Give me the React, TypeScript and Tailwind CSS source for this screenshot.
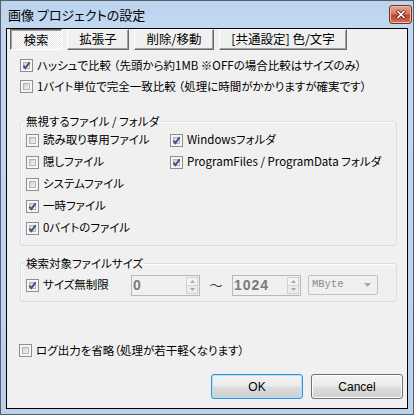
import React from 'react';

function Check({ checked }: { checked?: boolean }) {
  return (
    <span className="flex h-[13px] w-[13px] shrink-0 items-center justify-center border border-[#8f8f8f] bg-[#f6f6f6] p-[2px]">
      <span className="flex h-full w-full items-center justify-center border border-[#b5b5b5] bg-gradient-to-br from-[#d0d0d0] to-[#f6f6f6]">
        {checked && (
          <svg width="9" height="9" viewBox="0 0 9 9" className="shrink-0">
            <path d="M1.4 4.6 L3.4 7.1 L7.6 1.4" fill="none" stroke="#3f5487" strokeWidth="1.9" />
          </svg>
        )}
      </span>
    </span>
  );
}

function CheckRow({ checked, label, className = '' }: { checked?: boolean; label: string; className?: string }) {
  return (
    <div className={'flex items-center gap-[4px] ' + className}>
      <Check checked={checked} />
      <span className="whitespace-nowrap">{label}</span>
    </div>
  );
}

function Tab({ label, active, width }: { label: string; active?: boolean; width: string }) {
  if (active) {
    return (
      <div
        className={
          width +
          ' flex h-[21px] items-center justify-center border border-b-white border-l-[#696969] border-r-white border-t-[#696969] bg-[image:repeating-conic-gradient(#ffffff_0_25%,#e6e6e6_0_50%)] bg-[length:2px_2px] pt-[1px] shadow-[inset_1px_1px_0_#a0a0a0]'
        }
      >
        {label}
      </div>
    );
  }
  return (
    <div
      className={
        width +
        ' flex h-[21px] items-center justify-center border border-b-[#696969] border-l-white border-r-[#696969] border-t-white bg-[#f0f0f0] shadow-[inset_-1px_-1px_0_#a0a0a0]'
      }
    >
      {label}
    </div>
  );
}

function Spin({ value }: { value: string }) {
  return (
    <div className="flex h-[21px] w-[69px] items-center border border-[#b5b9bd] bg-[#f0f0f0]">
      <span className="flex-1 pl-[1px] font-['Liberation_Sans',sans-serif] text-[14px] font-bold leading-none tracking-[1px] text-[#7a7a7a]">
        {value}
      </span>
      <div className="mr-[1px] flex h-[17px] w-[12px] flex-col border border-[#d2d2d2]">
        <div className="flex flex-1 items-center justify-center border-b border-[#d2d2d2] bg-[#f4f4f4]">
          <svg width="5" height="3" viewBox="0 0 5 3">
            <path d="M0 3 L2.5 0 L5 3 Z" fill="#a8a8a8" />
          </svg>
        </div>
        <div className="flex flex-1 items-center justify-center bg-[#ececec]">
          <svg width="5" height="3" viewBox="0 0 5 3">
            <path d="M0 0 L2.5 3 L5 0 Z" fill="#a8a8a8" />
          </svg>
        </div>
      </div>
    </div>
  );
}

function Button({ label, primary }: { label: string; primary?: boolean }) {
  return (
    <div
      className={
        'flex h-[25px] w-[92px] items-center justify-center rounded-[3px] border bg-[image:linear-gradient(#f3f3f3_0%,#ebebeb_48%,#dddddd_52%,#cfcfcf_100%)] font-["Liberation_Sans",sans-serif] text-[12px] ' +
        (primary ? 'border-[#3c8fd6] shadow-[inset_0_0_0_1px_#a6e4fc]' : 'border-[#707070] shadow-[inset_0_0_0_1px_#fcfcfc]')
      }
    >
      {label}
    </div>
  );
}

export default function App() {
  return (
    <div className="flex h-[415px] w-[414px] flex-col border border-[#585f68] bg-[image:linear-gradient(#bcd3ee,#c4d9f1_30px,#b9d1ea)] font-['Noto_Sans_CJK_JP',sans-serif] text-[11.5px] text-black">
      {/* title bar */}
      <div className="flex h-[27px] shrink-0 items-center justify-between pl-[7px] pr-[1px]">
        <span className="text-[13px] leading-none [font-feature-settings:'palt']">画像 プロジェクトの設定</span>
        <div className="mt-[4px] flex h-[19px] w-[23px] items-center justify-center self-start rounded-[3px] border border-[#6e3425] bg-[image:linear-gradient(#eaa58f,#d5795e_45%,#c2432a_55%,#d7705a)] shadow-[inset_0_0_0_1px_#f0b9a8]">
          <svg width="10" height="9" viewBox="0 0 10 9">
            <path d="M2 1.5 L8 7.5 M8 1.5 L2 7.5" stroke="#5a2a20" strokeWidth="3.2" strokeLinecap="square" />
            <path d="M2 1.5 L8 7.5 M8 1.5 L2 7.5" stroke="#ffffff" strokeWidth="1.6" strokeLinecap="square" />
          </svg>
        </div>
      </div>

      {/* client area */}
      <div className="mx-[5px] mb-[5px] flex flex-1 flex-col border border-black bg-[#f0f0f0] px-[13px] [font-feature-settings:'palt']">
        <div className="-ml-[10px] flex gap-[5px] text-[12.5px]">
          <Tab label="検索" active width="w-[52px]" />
          <Tab label="拡張子" width="w-[62px]" />
          <Tab label="削除/移動" width="w-[80px]" />
          <Tab label="[共通設定] 色/文字" width="w-[128px]" />
        </div>

        <CheckRow className="mt-[5px] h-[21px]" checked label="ハッシュで比較 （先頭から約1MB ※OFFの場合比較はサイズのみ）" />
        <CheckRow className="h-[21px]" label="1バイト単位で完全一致比較 （処理に時間がかかりますが確実です）" />

        <fieldset className="mt-[16px] w-[377px] rounded-[3px] border border-[#d5dfe5] pb-[6px] pl-[5px] shadow-[inset_1px_1px_0_#ffffff]">
          <legend className="-ml-[1px] px-[1px] leading-[16px]">無視するファイル / フォルダ</legend>
          <div className="grid grid-cols-[144px_1fr]">
            <CheckRow className="h-[22px]" label="読み取り専用ファイル" />
            <CheckRow className="h-[22px]" checked label="Windowsフォルダ" />
            <CheckRow className="h-[22px]" label="隠しファイル" />
            <CheckRow className="h-[22px]" checked label="ProgramFiles / ProgramData フォルダ" />
            <CheckRow className="col-span-2 h-[22px]" label="システムファイル" />
            <CheckRow className="col-span-2 h-[22px]" checked label="一時ファイル" />
            <CheckRow className="col-span-2 h-[22px]" checked label="0バイトのファイル" />
          </div>
        </fieldset>

        <fieldset className="mt-[9px] w-[377px] rounded-[3px] border border-[#d5dfe5] pb-[5px] pl-[5px] shadow-[inset_1px_1px_0_#ffffff]">
          <legend className="-ml-[1px] px-[1px] leading-[16px]">検索対象ファイルサイズ</legend>
          <div className="mt-[3px] flex h-[22px] items-center">
            <CheckRow className="w-[105px]" checked label="サイズ無制限" />
            <Spin value="0" />
            <span className="w-[32px] text-center text-[13px] text-[#333]">～</span>
            <Spin value="1024" />
            <div className="ml-[7px] flex h-[20px] w-[70px] items-center justify-between rounded-[2px] border border-[#c3c3c3] bg-[#f0f0f0] pl-[3px] pr-[6px]">
              <span className="font-['Liberation_Mono',monospace] text-[10.5px] text-[#8a8a8a]">MByte</span>
              <svg width="7" height="4" viewBox="0 0 7 4">
                <path d="M0 0 L3.5 4 L7 0 Z" fill="#a8a8a8" />
              </svg>
            </div>
          </div>
        </fieldset>

        <CheckRow className="-ml-[1px] mt-[38px] h-[21px]" label="ログ出力を省略（処理が若干軽くなります）" />

        <div className="-mr-[9px] mt-[13px] flex justify-end gap-[8px]">
          <Button label="OK" primary />
          <Button label="Cancel" />
        </div>
      </div>
    </div>
  );
}
